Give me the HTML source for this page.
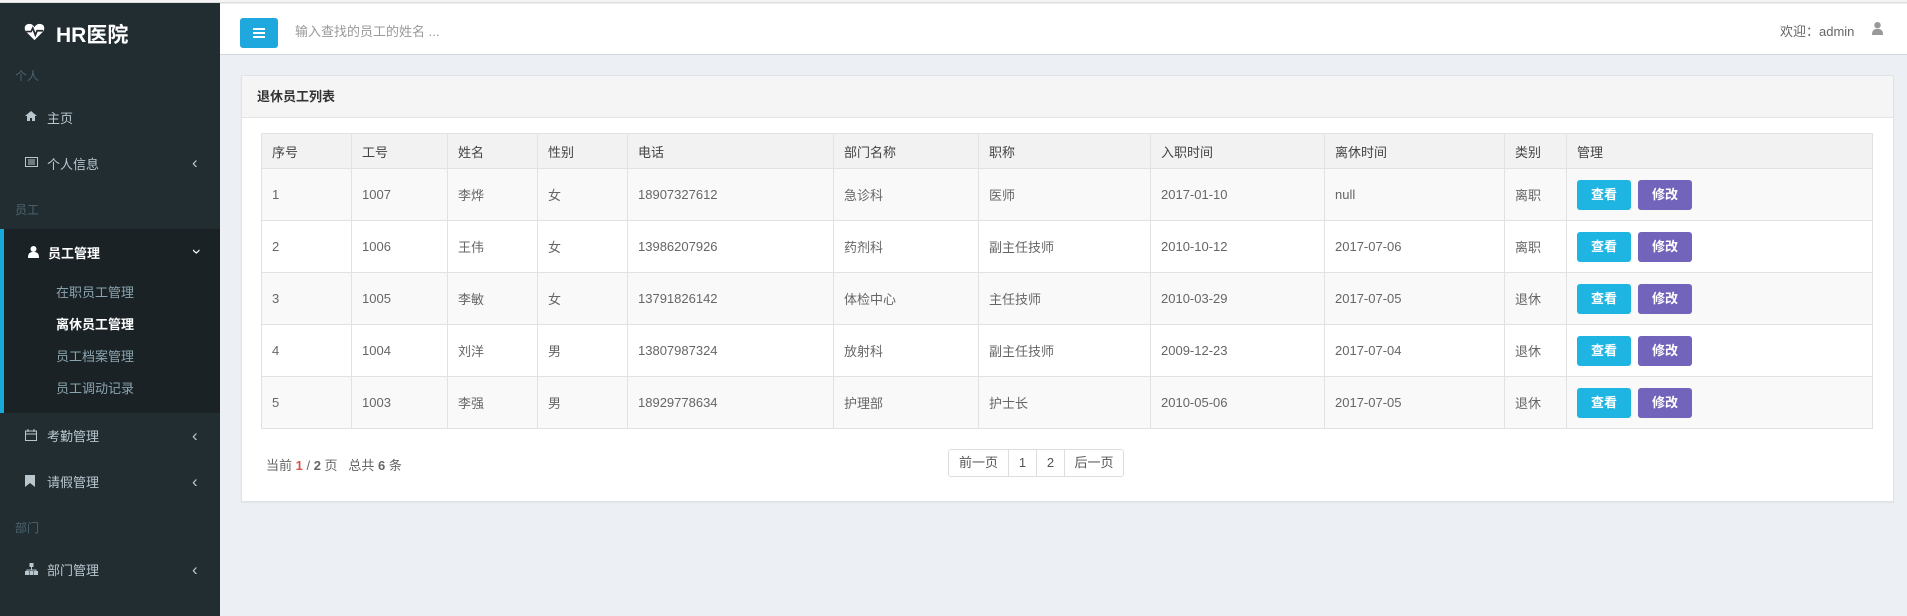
<!DOCTYPE html>
<html><head><meta charset="utf-8"><style>
*{margin:0;padding:0;box-sizing:border-box}
body{width:1907px;height:616px;overflow:hidden;background:#ecf0f5;font-family:"Liberation Sans","Noto Sans CJK SC",sans-serif;position:relative;font-size:14px;color:#555}
.topline{position:absolute;left:0;top:0;width:1907px;height:3px;background:#f4f4f4;border-bottom:1px solid #ddd}
.side{position:absolute;left:0;top:3px;width:220px;height:613px;background:#222d32}
.abs{position:absolute;white-space:nowrap}
.logo{left:56px;top:16px;color:#fff;font-weight:bold;font-size:21px}
.lbl{left:15px;color:#4b646f;font-size:12px}
.item{left:47px;color:#b8c7ce;font-size:13px}
.chev{left:192px;color:#b8c7ce;font-size:17px;line-height:17px}
.active{position:absolute;left:0;top:226px;width:220px;height:184px;background:#1a2226;border-left:4px solid #19a9d8}
.sub{left:56px;color:#8aa4af;font-size:13px}
.header{position:absolute;left:220px;top:4px;width:1687px;height:51px;background:#fff;border-bottom:1px solid #d2d6de}
.menubtn{position:absolute;left:240px;top:18px;width:38px;height:30px;background:#1fa8de;border-radius:3px}
.menubtn i{position:absolute;left:13px;width:12px;height:2px;background:#fff}
.panel{position:absolute;left:241px;top:75px;width:1653px;height:427px;background:#fff;border:1px solid #dfe3e8;box-shadow:0 1px 1px rgba(0,0,0,.05)}
.phead{height:42px;background:#f5f5f5;border-bottom:1px solid #e4e4e4;padding:0 15px;line-height:42px;font-weight:bold;color:#333;font-size:13px}
table{position:absolute;left:261px;top:133px;border-collapse:collapse;font-size:13px;color:#666}
td,th{border:1px solid #e2e2e2;padding:0 10px;text-align:left;font-weight:normal;height:52px;vertical-align:middle}
th{height:35px;background:#f2f2f2;color:#444}
tr.o td{background:#f9f9f9}
.b{display:inline-block;width:54px;height:30px;line-height:30px;text-align:center;color:#fff;border-radius:3px;font-size:13px;font-weight:bold;margin-right:7px}
.pg{position:absolute;left:948px;top:449px;height:28px;display:flex;border:1px solid #ddd;border-radius:3px;font-size:13px;color:#555}
.pg span{border-left:1px solid #ddd;line-height:26px;text-align:center}
</style></head><body>
<div class="topline"></div>
<div class="side">
<svg class="abs" style="left:24px;top:20px" width="21" height="18" viewBox="0 0 24 21"><path d="M12 20 L2 10 C-1 6 1 1 6 1 C9 1 11 3 12 5 C13 3 15 1 18 1 C23 1 25 6 22 10 Z" fill="#fff"/><path d="M2 10 H8 L10 6 L13 14 L15 9 H22" stroke="#222d32" stroke-width="2" fill="none"/></svg>
<div class="abs logo">HR医院</div>
<div class="abs lbl" style="top:64px">个人</div>
<svg class="abs" style="left:25px;top:108px" width="12" height="10" viewBox="0 0 12 10"><path d="M6 0 L12 5 H10 V10 H7 V7 H5 V10 H2 V5 H0Z" fill="#b8c7ce"/></svg>
<div class="abs item" style="top:105px">主页</div>
<svg class="abs" style="left:25px;top:154px" width="13" height="10" viewBox="0 0 13 10"><rect x=".5" y=".5" width="12" height="9" fill="none" stroke="#b8c7ce"/><path d="M3 3h7M3 5h7M3 7h7" stroke="#b8c7ce"/></svg>
<div class="abs item" style="top:151px">个人信息</div>
<div class="abs chev" style="top:151px">‹</div>
<div class="abs lbl" style="top:198px">员工</div>
<div class="active"></div>
<svg class="abs" style="left:28px;top:243px" width="11" height="12" viewBox="0 0 11 12"><circle cx="5.5" cy="3" r="3" fill="#fff"/><path d="M0 12 C0 7 2 6 5.5 6 C9 6 11 7 11 12Z" fill="#fff"/></svg>
<div class="abs item" style="top:240px;color:#fff;font-weight:bold;left:48px">员工管理</div>
<div class="abs chev" style="top:240px;color:#fff;transform:rotate(-90deg)">‹</div>
<div class="abs sub" style="top:279px">在职员工管理</div>
<div class="abs sub" style="top:311px;color:#fff;font-weight:bold">离休员工管理</div>
<div class="abs sub" style="top:343px">员工档案管理</div>
<div class="abs sub" style="top:375px">员工调动记录</div>
<svg class="abs" style="left:25px;top:426px" width="12" height="12" viewBox="0 0 12 12"><rect x=".5" y="2" width="11" height="9.5" fill="none" stroke="#b8c7ce"/><path d="M3 0v3M9 0v3M.5 5h11" stroke="#b8c7ce"/></svg>
<div class="abs item" style="top:423px">考勤管理</div>
<div class="abs chev" style="top:424px">‹</div>
<svg class="abs" style="left:25px;top:472px" width="10" height="12" viewBox="0 0 10 12"><path d="M0 0H10V12L5 8L0 12Z" fill="#b8c7ce"/></svg>
<div class="abs item" style="top:469px">请假管理</div>
<div class="abs chev" style="top:470px">‹</div>
<div class="abs lbl" style="top:516px">部门</div>
<svg class="abs" style="left:25px;top:560px" width="13" height="12" viewBox="0 0 13 12"><rect x="4.5" y="0" width="4" height="4" fill="#b8c7ce"/><path d="M6.5 4v3M2 9V7h9v2" stroke="#b8c7ce" fill="none"/><rect x="0" y="8" width="4" height="4" fill="#b8c7ce"/><rect x="4.5" y="8" width="4" height="4" fill="#b8c7ce"/><rect x="9" y="8" width="4" height="4" fill="#b8c7ce"/></svg>
<div class="abs item" style="top:557px">部门管理</div>
<div class="abs chev" style="top:558px">‹</div>
</div>
<div class="header"></div>
<div class="menubtn"><i style="top:10px"></i><i style="top:14px"></i><i style="top:18px"></i></div>
<div class="abs" style="left:295px;top:21px;color:#999;font-size:13px">输入查找的员工的姓名 ...</div>
<div class="abs" style="left:1780px;top:21px;color:#666;font-size:13px">欢迎：admin</div>
<svg class="abs" style="left:1872px;top:22px" width="11" height="13" viewBox="0 0 11 13"><circle cx="5.5" cy="3.2" r="3.2" fill="#999"/><path d="M0 13C0 8 2 7 5.5 7C9 7 11 8 11 13Z" fill="#999"/></svg>
<div class="panel"><div class="phead">退休员工列表</div></div>
<table>
<tr><th style="width:90px">序号</th><th style="width:96px">工号</th><th style="width:90px">姓名</th><th style="width:90px">性别</th><th style="width:206px">电话</th><th style="width:145px">部门名称</th><th style="width:172px">职称</th><th style="width:174px">入职时间</th><th style="width:180px">离休时间</th><th style="width:62px">类别</th><th style="width:306px">管理</th></tr>
<tr class="o"><td>1</td><td>1007</td><td>李烨</td><td>女</td><td>18907327612</td><td>急诊科</td><td>医师</td><td>2017-01-10</td><td>null</td><td>离职</td><td><span class="b" style="background:#1fb5e2">查看</span><span class="b" style="background:#7264bb">修改</span></td></tr>
<tr><td>2</td><td>1006</td><td>王伟</td><td>女</td><td>13986207926</td><td>药剂科</td><td>副主任技师</td><td>2010-10-12</td><td>2017-07-06</td><td>离职</td><td><span class="b" style="background:#1fb5e2">查看</span><span class="b" style="background:#7264bb">修改</span></td></tr>
<tr class="o"><td>3</td><td>1005</td><td>李敏</td><td>女</td><td>13791826142</td><td>体检中心</td><td>主任技师</td><td>2010-03-29</td><td>2017-07-05</td><td>退休</td><td><span class="b" style="background:#1fb5e2">查看</span><span class="b" style="background:#7264bb">修改</span></td></tr>
<tr><td>4</td><td>1004</td><td>刘洋</td><td>男</td><td>13807987324</td><td>放射科</td><td>副主任技师</td><td>2009-12-23</td><td>2017-07-04</td><td>退休</td><td><span class="b" style="background:#1fb5e2">查看</span><span class="b" style="background:#7264bb">修改</span></td></tr>
<tr class="o"><td>5</td><td>1003</td><td>李强</td><td>男</td><td>18929778634</td><td>护理部</td><td>护士长</td><td>2010-05-06</td><td>2017-07-05</td><td>退休</td><td><span class="b" style="background:#1fb5e2">查看</span><span class="b" style="background:#7264bb">修改</span></td></tr>
</table>
<div class="abs" style="left:266px;top:455px;font-size:13px;color:#666">当前 <b style="color:#d9534f">1</b> / <b>2</b> 页 &nbsp; 总共 <b>6</b> 条</div>
<div class="pg"><span style="width:59px;border-left:0">前一页</span><span style="width:28px">1</span><span style="width:28px">2</span><span style="width:59px">后一页</span></div>
</body></html>
